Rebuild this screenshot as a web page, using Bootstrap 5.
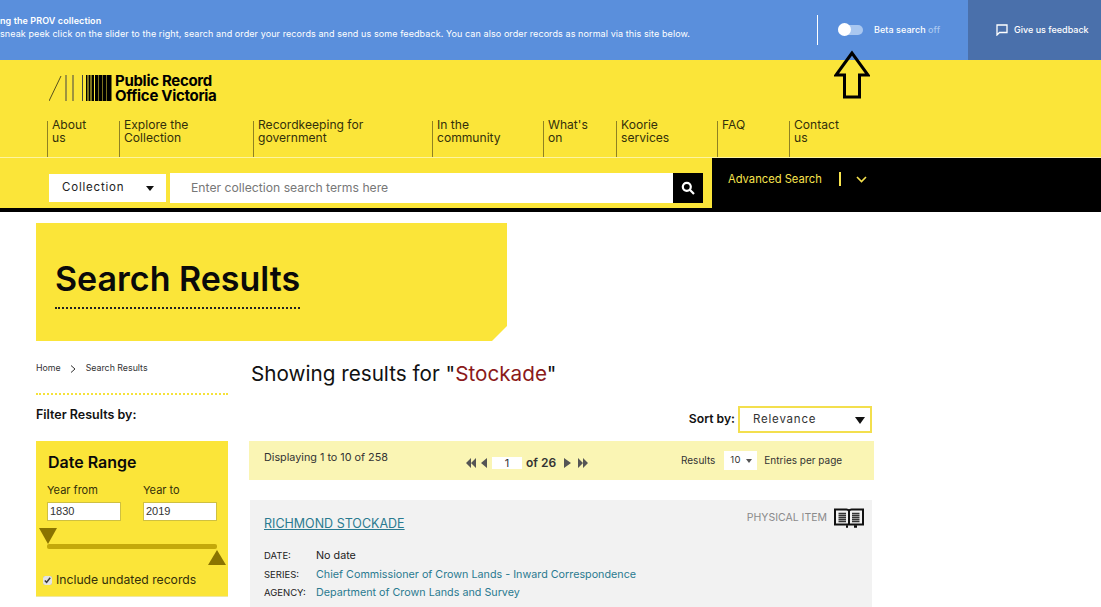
<!DOCTYPE html>
<html lang="en">
<head>
<meta charset="utf-8">
<title>Search Results</title>
<link href="https://cdn.jsdelivr.net/npm/bootstrap@5.3.0/dist/css/bootstrap.min.css" rel="stylesheet">
<style>
html,body{height:607px;overflow:hidden}
body{font-family:Inter,"Liberation Sans",sans-serif;color:#111;background:#fff;position:relative}
a{color:#2a7a90;text-decoration:none}
.topbar{height:60px;background:#5a8fdc;color:#fff;font-size:9px}
.top-msg{width:817px;line-height:13px;padding-top:14px;letter-spacing:.09px}
.top-msg b{font-weight:600}
.top-rule{width:1px;height:30px;background:#fff}
.beta-wrap{width:150px;padding-left:20px;gap:11px;font-weight:500;letter-spacing:.05px}
.beta-off{color:#a9c7f0}
.toggle-track{width:25px;height:10px;border-radius:5px;background:#a9c7f0;position:relative}
.toggle-knob{position:absolute;left:0;top:-2px;width:13px;height:13px;border-radius:50%;background:#fff}
.feedback{width:133px;background:#4a70ab;padding-left:28px;gap:6px;font-weight:500}
.masthead{background:#fbe539;height:97px;border-bottom:1px solid #fdf4a0;box-sizing:content-box}
.logo-row{height:61px;padding-left:49px;padding-top:13px;gap:2px}
.logo-text{font-size:15px;line-height:14.5px;font-weight:700;letter-spacing:-.3px;color:#000;padding-top:1px}
.nav-row{padding-left:47px;height:36px}
.nav-cell{border-left:1px solid #8f8122;padding-left:4px;font-size:12.1px;line-height:13px;color:#33300a}
.nav-cell span{display:block;margin-top:-3px}
.c1{width:72px}.c2{width:134px}.c3{width:179px}.c4{width:111px}.c5{width:73px}.c6{width:101px}.c7{width:72px}.c8{width:70px}
.search-band{height:54px;background:#000}
.search-left{width:712px;height:50px;background:#fbe539;padding:15px 9px 0 49px;gap:4px}
.coll-box{width:117px;height:28px;margin-top:1px;background:#fff;font-size:11.5px;letter-spacing:.8px;padding:0 12px 0 13px;color:#222}
.tri-down{width:0;height:0;border-left:4.5px solid transparent;border-right:4.5px solid transparent;border-top:5px solid #111}
.search-input{height:30px;background:#fff;color:#777;font-size:12.2px;padding-left:21px}
.search-go{width:30px;height:30px;background:#000}
.adv{padding:13px 0 0 16px;font-size:11.2px;color:#f7e34e;height:54px}
.adv-sep{width:2px;height:14px;background:#f7e34e;margin:1px 15px 0 17px}
.adv-chev{margin-top:5px}
.page-banner{margin:11px 0 0 36px;width:471px;height:118px;background:#fbe539;clip-path:polygon(0 0,100% 0,100% 103px,456px 100%,0 100%);padding:37px 0 0 19px}
.page-title{display:inline-block;font-size:34px;font-weight:600;line-height:38px;color:#0a0a0a;padding-bottom:9px;border-bottom:2px dotted #222;margin:0}
.content{padding-left:36px;gap:21px}
.side{width:192px}
.crumbs{font-size:8.8px;padding-top:20px;height:54px;border-bottom:2px dotted #f5e23a;gap:9.5px;color:#333;align-items:flex-start}
.filter-head{font-size:12.5px;font-weight:600;margin:12px 0 18px;line-height:16px}
.date-box{height:156px;background:#fbe539;padding:11px 11px 0;position:relative;border-bottom:1px solid #efe8a0}
.date-title{font-size:16px;font-weight:600;line-height:20px;margin:0 0 11px 1px;color:#0a0a0a}
.yr-label{font-size:11px;line-height:14px;color:#33300a;margin-bottom:5px}
.yr-input{width:74px;height:19px;background:#fff;border:1px solid #cfc040;font-family:"Liberation Sans",sans-serif;font-size:11px;padding:0 2px;line-height:17px;color:#333}
.yr-col{flex:0 0 96px}
.yr-col+.yr-col{flex-basis:74px}
.slide-zone{position:relative;height:52px}
.slide-track{position:absolute;left:0;top:23px;width:170px;height:5px;border-radius:2px;background:#c4a90a}
.tri-a{position:absolute;left:-8px;top:7px;width:0;height:0;border-left:9px solid transparent;border-right:9px solid transparent;border-top:16px solid #8a7400}
.tri-b{position:absolute;left:161px;top:29px;width:0;height:0;border-left:9px solid transparent;border-right:9px solid transparent;border-bottom:15px solid #8a7400}
.undated{font-size:12.2px;line-height:14px;margin:0 0 0 -4px;gap:4px;color:#33300a}
.undated input{width:9px;height:9px;margin:0;accent-color:#e4e4e4}
.main-col{width:625px;padding-top:20px}
.results-h{font-size:20.7px;line-height:26px;margin:0;font-weight:400;padding-left:2px;color:#111}
.results-h span{color:#8b1a1a}
.sort-row{padding-right:2px;margin-top:19px;gap:3px;height:27px}
.sort-lab{font-size:12.2px;font-weight:600}
.sort-box{width:134px;height:27px;border:2px solid #f3df4e;padding:1px 5px 0 13px;font-size:11.5px;letter-spacing:.8px;color:#333}
.sort-box .tri-down{border-left-width:5px;border-right-width:5px;border-top-width:7px}
.pager-bar{height:39px;margin-top:8px;background:#faf5b4;padding-left:15px;font-size:10.8px;color:#333;position:relative}
.disp{width:202px;padding-bottom:5px}
.pg-wrap{width:215px;font-weight:600;font-size:12px;gap:4px;padding-top:5px}
.pg-num{width:30px;height:12px;background:#fff;font-weight:400;font-size:11px;line-height:12px;text-align:center}
.res-wrap{gap:8px;font-size:10px}
.per-box{width:33px;height:19px;background:#fff;font-size:9.5px;padding-left:6px;gap:5px;letter-spacing:.4px;margin:0 -1px 0 1px}
.tri-small{width:0;height:0;border-left:3px solid transparent;border-right:3px solid transparent;border-top:4px solid #555}
.rec-card{margin:20px 2px 0 1px;height:120px;background:#f2f2f2;padding:16px 8px 0 14px}
.rec-title{font-size:12.5px;line-height:16px;color:#2a7a90;text-decoration:underline}
.rec-type{font-size:10.5px;color:#8a8a8a;gap:7px;margin-top:-8px}
.rec-meta{display:grid;grid-template-columns:52px auto;font-size:10.75px;line-height:18.500px;margin-top:15px;justify-content:start;color:#222}
.rec-meta .lab{font-size:9.5px;color:#222}
.beta-arrow{position:absolute;left:834px;top:50px}
</style>
</head>
<body>
<div class="topbar d-flex">
  <div class="top-msg"><b>ng the PROV collection</b><br>sneak peek click on the slider to the right, search and order your records and send us some feedback. You can also order records as normal via this site below.</div>
  <div class="d-flex align-items-center"><div class="top-rule"></div></div>
  <div class="beta-wrap d-flex align-items-center">
    <div class="toggle-track"><div class="toggle-knob"></div></div>
    <div>Beta search <span class="beta-off">off</span></div>
  </div>
  <div class="feedback d-flex align-items-center">
    <svg width="12" height="12" viewBox="0 0 12 12" fill="none" stroke="#fff" stroke-width="1.3"><path d="M1 1h10v7.5H3.5L1 11z"/></svg>
    <span>Give us feedback</span>
  </div>
</div>
<svg class="beta-arrow" width="36" height="50" viewBox="0 0 36 50" fill="none" stroke="#000" stroke-width="3" stroke-linejoin="miter"><path d="M18 3 2 25h8.500v22h15V25H34z"/></svg>

<header class="masthead">
  <div class="logo-row d-flex">
    <svg width="64" height="32" viewBox="0 0 64 32" fill="#000"><path d="M0 28 12 3" stroke="#111" stroke-width=".7"/><rect x="16.500" y="2" width="1" height="26" fill="#444"/><rect x="23.500" y="2" width="1" height="26" fill="#444"/><rect x="33" y="2" width="1" height="26" fill="#444"/><rect x="37" y="2" width="1.500" height="26"/><rect x="39.500" y="2" width="2" height="26"/><rect x="42.500" y="2" width="2.500" height="26"/><rect x="46" y="2" width="3" height="26"/><rect x="49.500" y="2" width="3.500" height="26"/><rect x="53.500" y="2" width="4" height="26"/><rect x="58" y="2" width="4.500" height="26"/></svg>
    <div class="logo-text">Public Record<br>Office Victoria</div>
  </div>
  <nav class="nav-row d-flex">
    <div class="nav-cell c1"><span>About<br>us</span></div>
    <div class="nav-cell c2"><span>Explore the<br>Collection</span></div>
    <div class="nav-cell c3"><span>Recordkeeping for<br>government</span></div>
    <div class="nav-cell c4"><span>In the<br>community</span></div>
    <div class="nav-cell c5"><span>What's<br>on</span></div>
    <div class="nav-cell c6"><span>Koorie<br>services</span></div>
    <div class="nav-cell c7"><span>FAQ</span></div>
    <div class="nav-cell c8"><span>Contact<br>us</span></div>
  </nav>
</header>

<div class="search-band d-flex">
  <div class="search-left d-flex">
    <div class="coll-box d-flex align-items-center justify-content-between"><span>Collection</span><span class="tri-down"></span></div>
    <div class="search-input flex-grow-1 d-flex align-items-center justify-content-between pe-0">
      <span>Enter collection search terms here</span>
      <span class="search-go d-flex align-items-center justify-content-center">
        <svg width="14" height="14" viewBox="0 0 14 14" fill="none" stroke="#fff" stroke-width="2.200"><circle cx="5.800" cy="5.800" r="4"/><path d="M8.800 8.800 13 13"/></svg>
      </span>
    </div>
  </div>
  <div class="adv d-flex align-items-start">
    <span>Advanced Search</span>
    <span class="adv-sep"></span>
    <svg class="adv-chev" width="11" height="7" viewBox="0 0 11 7" fill="none" stroke="#f7e34e" stroke-width="1.600"><path d="M1 1l4.500 4.500L10 1"/></svg>
  </div>
</div>

<div class="page-banner"><h1 class="page-title">Search Results</h1></div>

<div class="content d-flex">
  <aside class="side">
    <div class="crumbs d-flex"><span>Home</span>
      <svg class="mt-1" width="6" height="8" viewBox="0 0 6 8" fill="none" stroke="#333" stroke-width="1"><path d="M1 .5 5 4 1 7.500"/></svg>
      <span>Search Results</span></div>
    <div class="filter-head">Filter Results by:</div>
    <div class="date-box">
      <div class="date-title">Date Range</div>
      <div class="d-flex">
        <div class="yr-col"><div class="yr-label">Year from</div><div class="yr-input">1830</div></div>
        <div class="yr-col"><div class="yr-label">Year to</div><div class="yr-input">2019</div></div>
      </div>
      <div class="slide-zone"><div class="slide-track"></div><div class="tri-a"></div><div class="tri-b"></div></div>
      <label class="undated d-flex align-items-center"><input type="checkbox" checked><span>Include undated records</span></label>
    </div>
  </aside>
  <main class="main-col">
    <h2 class="results-h">Showing results for "<span>Stockade</span>"</h2>
    <div class="sort-row d-flex justify-content-end align-items-center">
      <span class="sort-lab">Sort by:</span>
      <div class="sort-box d-flex align-items-center justify-content-between"><span>Relevance</span><span class="tri-down"></span></div>
    </div>
    <div class="pager-bar d-flex align-items-center">
      <div class="disp">Displaying 1 to 10 of 258</div>
      <div class="pg-wrap d-flex align-items-center">
        <svg width="22" height="10" viewBox="0 0 22 10" fill="#555"><path d="M5 0v10L0 5zM10 0v10L5 5zM21 0v10l-6-5z"/></svg>
        <span class="pg-num">1</span><span>of 26</span>
        <svg class="ms-1" width="24" height="10" viewBox="0 0 24 10" fill="#555"><path d="M0 0v10l7-5zM14 0v10l5-5zM19 0v10l5-5z"/></svg>
      </div>
      <div class="res-wrap d-flex align-items-center"><span>Results</span>
        <div class="per-box d-flex align-items-center"><span>10</span><span class="tri-small"></span></div>
        <span>Entries per page</span></div>
    </div>
    <article class="rec-card">
      <div class="d-flex justify-content-between align-items-start">
        <a class="rec-title" href="#">RICHMOND STOCKADE</a>
        <div class="rec-type d-flex align-items-center"><span>PHYSICAL ITEM</span>
          <svg width="30" height="20" viewBox="0 0 30 20" fill="none" stroke="#111" stroke-width="2"><path d="M1 1.500h11.500q2 0 2.500 1.500q.5-1.500 2.500-1.500H29v15H1z"/><path d="M15 3v13"/><path d="M4.500 5.500h7.500M4.500 7.500h7.500M4.500 9.500h7.500M4.500 11.500h7.500M4.500 13.500h7.500M18 5.500h7.500M18 7.500h7.500M18 9.500h7.500M18 11.500h7.500M18 13.500h7.500" stroke="#333" stroke-width="1.400"/><path d="M12 18.500h2M20 18.500h3" stroke-width="2.500"/></svg>
        </div>
      </div>
      <div class="rec-meta">
        <span class="lab">DATE:</span><span>No date</span>
        <span class="lab">SERIES:</span><a href="#">Chief Commissioner of Crown Lands - Inward Correspondence</a>
        <span class="lab">AGENCY:</span><a href="#">Department of Crown Lands and Survey</a>
      </div>
    </article>
  </main>
</div>
<script src="https://cdn.jsdelivr.net/npm/bootstrap@5.3.0/dist/js/bootstrap.bundle.min.js"></script>
</body>
</html>
